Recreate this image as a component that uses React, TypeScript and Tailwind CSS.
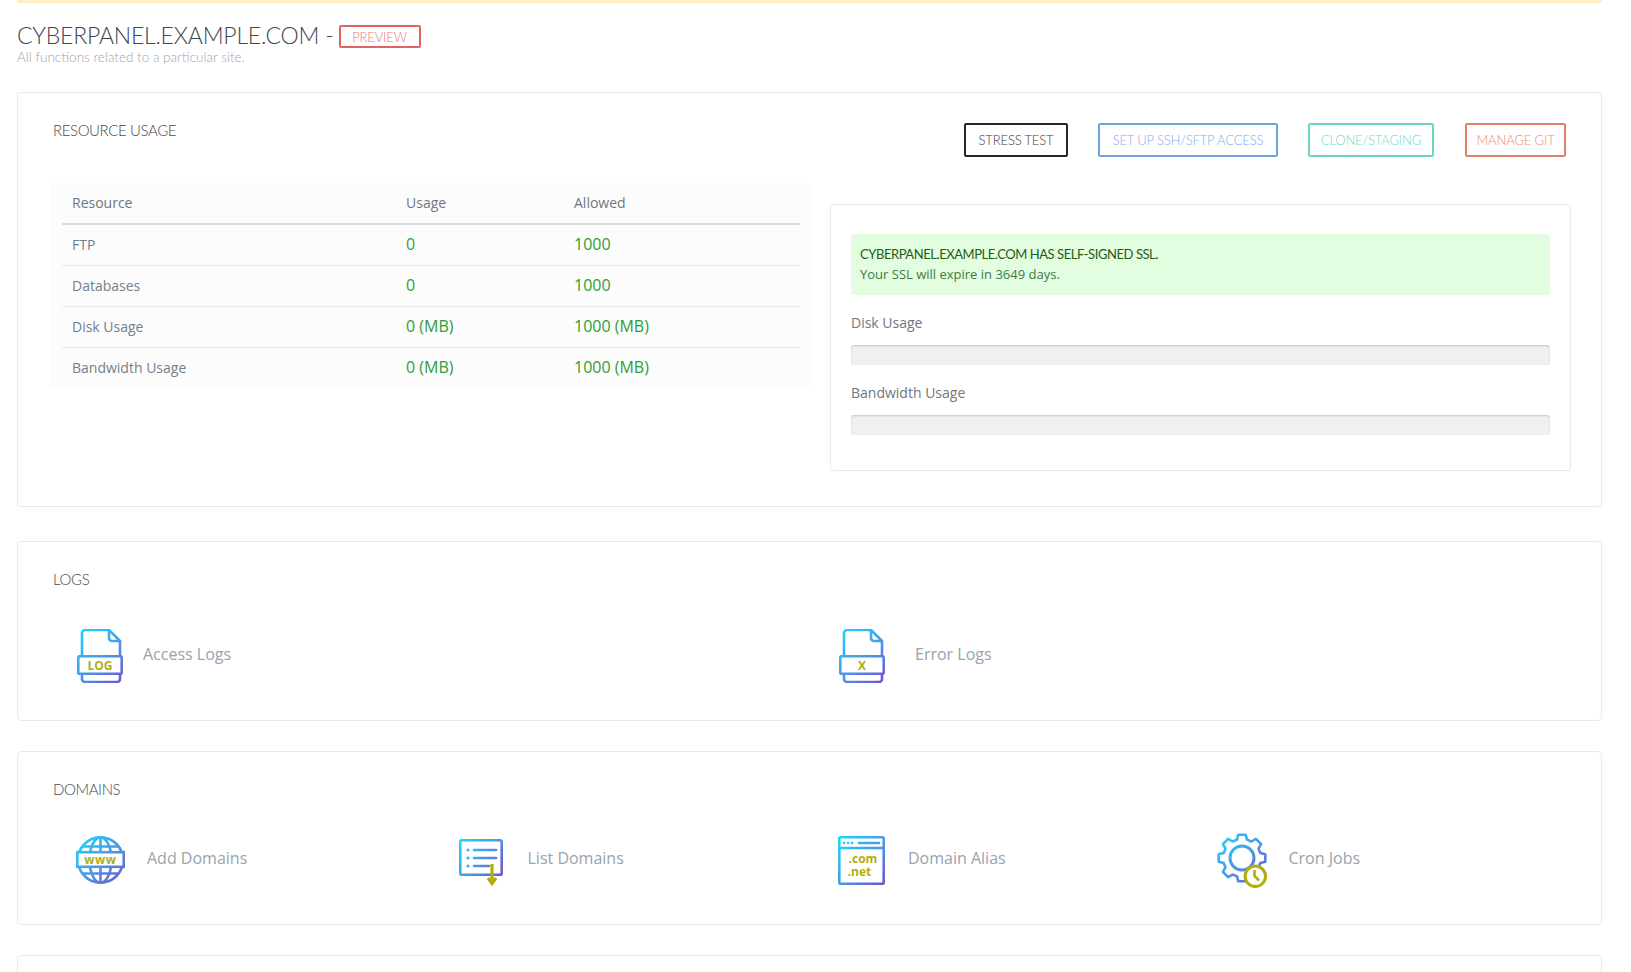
import React, { FC, ReactNode } from "react";

const OLIVE = "#b3ad0b";

// 8 tooth gear outline around (25,25), built once
const gearPath = (() => {
  const teeth = 8;
  const pts: string[] = [];
  for (let i = 0; i < teeth; i++) {
    const a = (i / teeth) * Math.PI * 2 - Math.PI / 2;
    const step = (Math.PI * 2) / teeth;
    const at = (r: number, t: number) =>
      `${(25 + r * Math.cos(t)).toFixed(2)} ${(25 + r * Math.sin(t)).toFixed(2)}`;
    pts.push(at(19, a - step * 0.34), at(23.6, a - step * 0.2), at(23.6, a + step * 0.2), at(19, a + step * 0.34));
  }
  return `M${pts.join("L")}Z`;
})();

const Gradient: FC<{ id: string; w: number; h: number }> = ({ id, w, h }) => (
  <defs>
    <linearGradient id={id} gradientUnits="userSpaceOnUse" x1="0" y1="0" x2={w} y2={h}>
      <stop offset="0" stopColor="#14dcff" />
      <stop offset="0.55" stopColor="#4e95e4" />
      <stop offset="1" stopColor="#7053cc" />
    </linearGradient>
  </defs>
);

const LogIcon: FC<{ id: string; label: string }> = ({ id, label }) => (
  <svg width="46" height="54" viewBox="0 0 46 54" fill="none" stroke={`url(#${id})`} strokeWidth="2.6" strokeLinejoin="round">
    <Gradient id={id} w={46} h={54} />
    <path d="M5 27V4a3 3 0 0 1 3-3H32L43 12V27" />
    <path d="M32 1V9a3 3 0 0 0 3 3H43" />
    <rect x="1.3" y="27.2" width="43.4" height="17.6" rx="1" />
    <path d="M5 45V50a3 3 0 0 0 3 3H40a3 3 0 0 0 3-3V45" />
    <text x="23" y="40.5" textAnchor="middle" stroke="none" fill={OLIVE} className="font-['Open_Sans'] text-[12px] font-bold">
      {label}
    </text>
  </svg>
);

const GlobeIcon: FC = () => (
  <svg width="49" height="48" viewBox="0 0 49 48" fill="none" stroke="url(#globe)" strokeWidth="2.6">
    <Gradient id="globe" w={49} h={48} />
    <circle cx="24.5" cy="24" r="22.6" />
    <ellipse cx="24.5" cy="24" rx="11" ry="22.6" />
    <path d="M24.5 1.4V46.6M6 10.5H43M6 37.5H43" />
    <rect x="1.3" y="16.2" width="46.4" height="14.6" fill="#fff" />
    <text x="24.5" y="27.8" textAnchor="middle" stroke="none" fill={OLIVE} className="font-['Open_Sans'] text-[12px] font-bold tracking-[0.5px]">
      www
    </text>
  </svg>
);

const ListIcon: FC = () => (
  <svg width="44" height="47" viewBox="0 0 44 47" fill="none" stroke="url(#list)" strokeWidth="2.6" strokeLinecap="round" className="mt-[5px]">
    <Gradient id="list" w={44} h={36} />
    <rect x="1.3" y="1.3" width="41.4" height="34.4" rx="1.5" />
    <path d="M15 11H37M15 19H37M15 27H30" />
    <path d="M9 11h.1M9 19h.1M9 27h.1" strokeWidth="3" />
    <path d="M33 25V45" stroke={OLIVE} strokeWidth="3.2" strokeLinecap="butt" />
    <path d="M29 39L33 44.5L37 39" stroke={OLIVE} strokeWidth="3.2" strokeLinecap="butt" />
  </svg>
);

const AliasIcon: FC = () => (
  <svg width="47" height="49" viewBox="0 0 47 49" fill="none" stroke="url(#alias)" strokeWidth="2.6" strokeLinecap="round">
    <Gradient id="alias" w={47} h={49} />
    <rect x="1.3" y="1.3" width="44.4" height="46.4" rx="1.5" />
    <path d="M1.3 12H45.7" />
    <path d="M21 7H41" strokeWidth="2.6" />
    <path d="M6 7h.1M10 7h.1M14 7h.1" strokeWidth="2.6" />
    <text x="25" y="27" textAnchor="middle" stroke="none" fill={OLIVE} className="font-['Open_Sans'] text-[12px] font-bold">
      .com
    </text>
    <text x="21.5" y="39.5" textAnchor="middle" stroke="none" fill={OLIVE} className="font-['Open_Sans'] text-[12px] font-bold">
      .net
    </text>
  </svg>
);

const CronIcon: FC = () => (
  <svg width="50" height="55" viewBox="0 0 50 55" fill="none" stroke="url(#cron)" strokeWidth="2.6" strokeLinejoin="round">
    <Gradient id="cron" w={50} h={50} />
    <path d={gearPath} />
    <circle cx="25" cy="25" r="12" strokeWidth="3" />
    <circle cx="38.3" cy="43.3" r="10.2" fill="#fff" stroke={OLIVE} strokeWidth="3" />
    <path d="M37.5 37V43L42 47.5" stroke={OLIVE} strokeWidth="2.6" />
  </svg>
);

const Card: FC<{ className?: string; children?: ReactNode }> = ({ className, children }) => (
  <div className={`rounded-[4px] border border-[#e8eaee] bg-white ${className ?? ""}`}>{children}</div>
);

const Heading: FC<{ className?: string; children: ReactNode }> = ({ className, children }) => (
  <h3 className={`h-5 font-['Lato'] text-[15px] font-light leading-5 tracking-[-0.4px] text-[#444a52] ${className ?? ""}`}>
    {children}
  </h3>
);

const Tile: FC<{ icon: ReactNode; label: string; gap: string }> = ({ icon, label, gap }) => (
  <div className="flex h-[60px] items-center">
    <div className="flex w-[80px] shrink-0 justify-center pt-[4px]">{icon}</div>
    <span className={`font-['Open_Sans'] text-base text-[#97a3af] ${gap}`}>{label}</span>
  </div>
);

const Action: FC<{ label: string; className: string }> = ({ label, className }) => (
  <button className={`h-[34px] rounded-[2px] border-2 bg-white pt-[2px] font-['Lato'] text-[13px] font-light tracking-[-0.15px] ${className}`}>
    {label}
  </button>
);

const usage = [
  ["FTP", "0", "1000"],
  ["Databases", "0", "1000"],
  ["Disk Usage", "0 (MB)", "1000 (MB)"],
  ["Bandwidth Usage", "0 (MB)", "1000 (MB)"],
];

const Meter: FC = () => (
  <div className="h-5 rounded-[3px] bg-[#f0f0f0] shadow-[inset_0_1px_2px_rgba(0,0,0,0.18)]" />
);

export default function App() {
  return (
    <div className="h-screen overflow-hidden bg-white">
      <div className="ml-[17px] w-[1585px]">
        <div className="h-[3px] rounded-b-[2px] bg-[#ffeec4]" />

        <div className="mt-[19px] flex h-[26px] items-center">
          <h1 className="font-['Lato'] text-[23px] font-light leading-[26px] tracking-[-0.22px] text-[#3e4650]">
            CYBERPANEL.EXAMPLE.COM -
          </h1>
          <span className="ml-[5px] mt-[3px] flex h-[23px] w-[82px] items-center justify-center rounded-[2px] border-2 border-[#e06464] pt-[2px] font-['Lato'] text-[13px] font-light tracking-[-0.15px] text-[#ee7676]">
            PREVIEW
          </span>
        </div>
        <p className="mt-[1px] font-['Lato'] text-[13.5px] font-light leading-[17px] text-[#9fa3a8]">
          All functions related to a particular site.
        </p>

        <Card className="mt-[26px] h-[415px]">
          <div className="flex items-start justify-between pl-[35px] pr-[35px] pt-[30px]">
            <Heading className="-mt-[3px]">RESOURCE USAGE</Heading>
            <div className="flex gap-[30px]">
              <Action label="STRESS TEST" className="w-[104px] border-[#23262a] text-[#3a3a3a]" />
              <Action label="SET UP SSH/SFTP ACCESS" className="w-[180px] border-[#6fa3e0] text-[#7fb0ea]" />
              <Action label="CLONE/STAGING" className="w-[126px] border-[#6dd5c3] text-[#6fdcc8]" />
              <Action label="MANAGE GIT" className="ml-[1px] w-[101px] border-[#e08068] text-[#ee8a72]" />
            </div>
          </div>

          <div className="mt-[26px] flex items-start pl-[32px]">
            <div className="w-[762px] rounded-[3px] bg-[#fcfcfd] px-3">
              <table className="w-full table-fixed font-['Open_Sans'] text-sm">
                <thead>
                  <tr className="h-[41px] border-b-2 border-[#dcdde1] text-left text-[#6f7780]">
                    <th className="w-[344px] pl-[10px] font-normal">Resource</th>
                    <th className="w-[168px] pl-0 font-normal">Usage</th>
                    <th className="font-normal">Allowed</th>
                  </tr>
                </thead>
                <tbody>
                  {usage.map(([name, used, allowed], i) => (
                    <tr key={name} className={`h-[41px] ${i < usage.length - 1 ? "border-b border-[#e6e8ec]" : ""}`}>
                      <td className="pl-[10px] text-[#74808c]">{name}</td>
                      <td className="pb-[2px] text-base text-[#2f9e33]">{used}</td>
                      <td className="pb-[2px] text-base text-[#2f9e33]">{allowed}</td>
                    </tr>
                  ))}
                </tbody>
              </table>
            </div>

            <div className="ml-[18px] mt-[21px] h-[267px] w-[741px] rounded-[3px] border border-[#e8eaee] px-5 pt-[29px] font-['Open_Sans']">
              <div className="h-[61px] rounded-[3px] bg-[#e3fde0] pl-[9px] pt-[10px]">
                <p className="font-['Lato'] text-[13px] leading-5 tracking-[-0.44px] text-[#1f5c14]">
                  CYBERPANEL.EXAMPLE.COM HAS SELF-SIGNED SSL.
                </p>
                <p className="text-[13px] leading-5 text-[#3d7a45]">Your SSL will expire in 3649 days.</p>
              </div>
              <p className="mt-[18px] text-sm leading-5 text-[#6f7780]">Disk Usage</p>
              <div className="mt-[12px]">
                <Meter />
              </div>
              <p className="mt-[18px] text-sm leading-5 text-[#6f7780]">Bandwidth Usage</p>
              <div className="mt-[12px]">
                <Meter />
              </div>
            </div>
          </div>
        </Card>

        <Card className="mt-[34px] h-[180px] pl-[35px] pt-[27px]">
          <Heading>LOGS</Heading>
          <div className="ml-[7px] mt-[35px] grid w-[1524px] grid-cols-2">
            <Tile icon={<LogIcon id="access" label="LOG" />} label="Access Logs" gap="ml-[3px]" />
            <Tile icon={<LogIcon id="error" label="X" />} label="Error Logs" gap="ml-[13px]" />
          </div>
        </Card>

        <Card className="mt-[30px] h-[174px] pl-[35px] pt-[27px]">
          <Heading>DOMAINS</Heading>
          <div className="ml-[7px] mt-[29px] grid w-[1522px] grid-cols-4">
            <Tile icon={<GlobeIcon />} label="Add Domains" gap="ml-[7px]" />
            <Tile icon={<ListIcon />} label="List Domains" gap="ml-[7px]" />
            <Tile icon={<AliasIcon />} label="Domain Alias" gap="ml-[7px]" />
            <Tile icon={<CronIcon />} label="Cron Jobs" gap="ml-[7px]" />
          </div>
        </Card>

        <Card className="mt-[30px] h-[120px]" />
      </div>
    </div>
  );
}
